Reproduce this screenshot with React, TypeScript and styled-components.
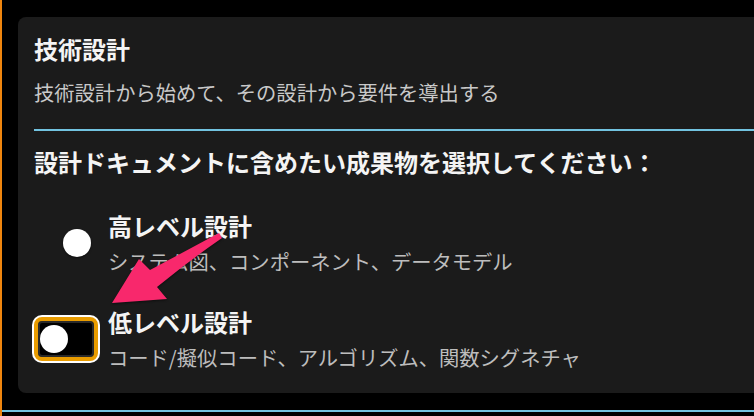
import * as React from "react";
import styled, { createGlobalStyle } from "styled-components";

const GlobalStyle = createGlobalStyle`
  html, body {
    margin: 0;
    padding: 0;
    background: #000;
  }
  body {
    font-family: "Noto Sans CJK JP", "Noto Sans", sans-serif;
  }
`;

const options = [
  {
    title: "高レベル設計",
    desc: "システム図、コンポーネント、データモデル",
    checked: true,
    focused: false,
  },
  {
    title: "低レベル設計",
    desc: "コード/擬似コード、アルゴリズム、関数シグネチャ",
    checked: false,
    focused: true,
  },
];

const PointerArrow = () => (
  <ArrowSvg width="130" height="85" viewBox="100 225 130 85">
    <path
      d="M112 303 L139 259 L150 270 Q182 253 219 233 L222 238 Q190 260 157 287 L167 299 Z"
      fill="#f8286c"
    />
  </ArrowSvg>
);

export default function App() {
  return (
    <>
      <GlobalStyle />
      <Page>
        <Card>
          <Title>技術設計</Title>
          <Subtitle>技術設計から始めて、その設計から要件を導出する</Subtitle>
          <Divider />
          <Question>設計ドキュメントに含めたい成果物を選択してください：</Question>
          <OptionList>
            {options.map((o) => (
              <OptionRow key={o.title}>
                <Track $checked={o.checked} $focused={o.focused}>
                  <Knob />
                </Track>
                <OptionText>
                  <OptionTitle>{o.title}</OptionTitle>
                  <OptionDesc>{o.desc}</OptionDesc>
                </OptionText>
              </OptionRow>
            ))}
          </OptionList>
        </Card>
        <BottomRule />
        <PointerArrow />
      </Page>
    </>
  );
}

const Page = styled.div`
  position: relative;
  width: 754px;
  height: 416px;
  box-sizing: border-box;
  overflow: hidden;
  background: #000;
  border-left: 2px solid #f0860f;
  padding: 17px 0 0 16px;
  display: flex;
  flex-direction: column;
`;

const Card = styled.section`
  background: #1b1b1b;
  border-radius: 8px 0 0 8px;
  margin-right: -20px;
  height: 376px;
  box-sizing: border-box;
  padding: 16px 0 0 16px;
  display: flex;
  flex-direction: column;
`;

const Title = styled.h1`
  margin: 0;
  font-size: 24px;
  line-height: 32px;
  font-weight: 700;
  color: #f4f4f4;
`;

const Subtitle = styled.p`
  margin: 13px 0 0;
  font-size: 20.3px;
  line-height: 28px;
  color: #c9c9c9;
`;

const Divider = styled.hr`
  margin: 23px 0 0;
  border: none;
  height: 2px;
  background: #72c3e0;
`;

const Question = styled.h2`
  margin: 15px 0 0;
  font-size: 24px;
  line-height: 32px;
  font-weight: 700;
  color: #f4f4f4;
`;

const OptionList = styled.div`
  margin-top: 33px;
  display: flex;
  flex-direction: column;
  gap: 32px;
`;

const OptionRow = styled.div`
  display: flex;
  align-items: center;
  gap: 10px;
  height: 64px;
`;

const Track = styled.div<{ $checked: boolean; $focused: boolean }>`
  width: 64px;
  height: 44px;
  box-sizing: border-box;
  flex-shrink: 0;
  border-radius: 8px;
  border: 4px solid ${(p) => (p.$focused ? "#e99c00" : "transparent")};
  background: ${(p) => (p.$checked ? "transparent" : "#000")};
  box-shadow: ${(p) =>
    [
      p.$focused ? "0 0 0 2px #fff" : "",
      p.$checked ? "" : "inset 0 0 0 2px #2a2a2a",
    ]
      .filter(Boolean)
      .join(", ") || "none"};
  display: flex;
  align-items: center;
  justify-content: ${(p) => (p.$checked ? "flex-end" : "flex-start")};
  padding: 0 3px 0 2px;
`;

const Knob = styled.span`
  width: 28px;
  height: 28px;
  border-radius: 50%;
  background: #fff;
  box-shadow: 0 1px 2px rgba(0, 0, 0, 0.5);
`;

const OptionText = styled.div`
  display: flex;
  flex-direction: column;
  gap: 6px;
`;

const OptionTitle = styled.div`
  font-size: 24px;
  line-height: 30px;
  font-weight: 700;
  color: #f4f4f4;
`;

const OptionDesc = styled.div`
  font-size: 20.3px;
  line-height: 28px;
  color: #bdbdbd;
`;

const BottomRule = styled.div`
  margin: 17px -20px 0 -16px;
  height: 2px;
  background: #72c3e0;
`;

const ArrowSvg = styled.svg`
  position: absolute;
  left: 98px;
  top: 225px;
  filter: drop-shadow(0 1px 1px rgba(0, 0, 0, 0.5));
`;
